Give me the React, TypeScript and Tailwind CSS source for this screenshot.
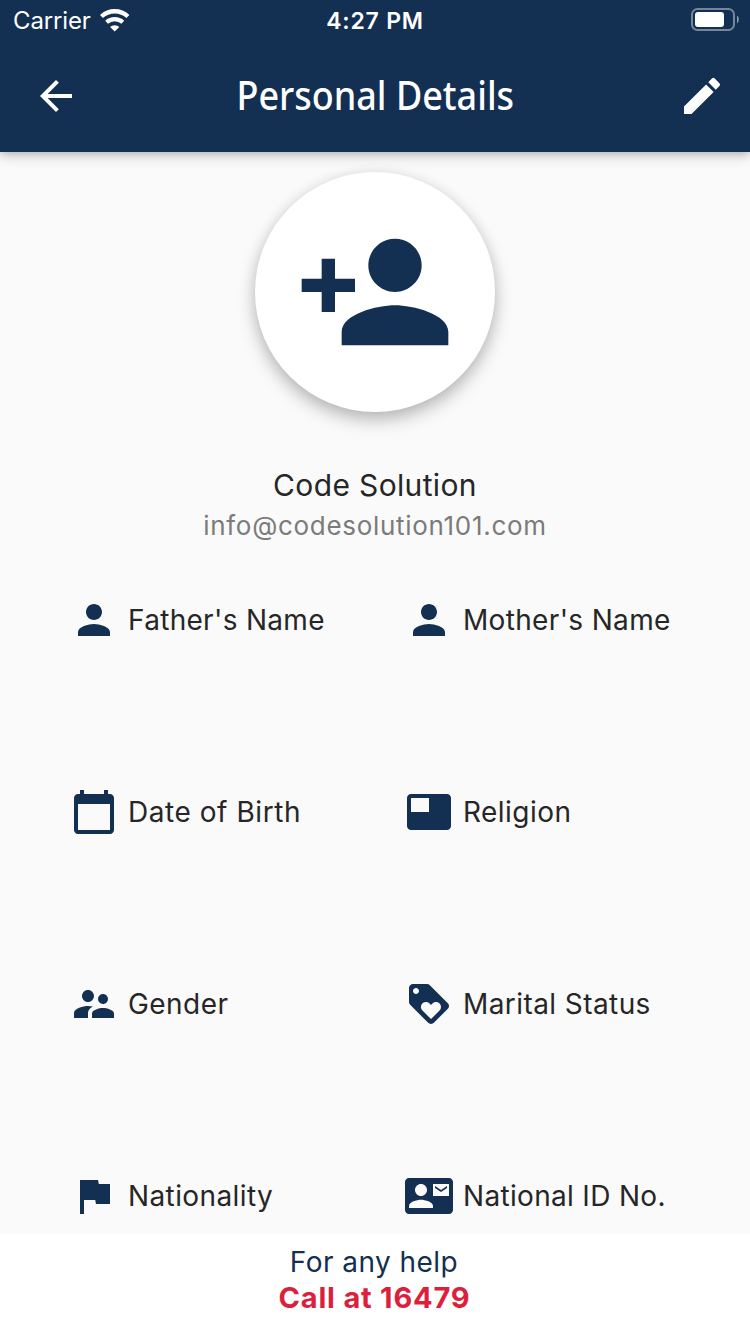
import type { IconType } from "react-icons";
import {
  MdArrowBack,
  MdCalendarToday,
  MdContactMail,
  MdEdit,
  MdFeaturedVideo,
  MdFlag,
  MdLoyalty,
  MdPerson,
  MdPersonAdd,
  MdSupervisorAccount,
} from "react-icons/md";

type Field = { label: string; icon: IconType; tracking: string };

const fields: Field[] = [
  { label: "Father's Name", icon: MdPerson, tracking: "tracking-[0.3px]" },
  { label: "Mother's Name", icon: MdPerson, tracking: "tracking-[0.33px]" },
  { label: "Date of Birth", icon: MdCalendarToday, tracking: "tracking-[0.55px]" },
  { label: "Religion", icon: MdFeaturedVideo, tracking: "tracking-[0.45px]" },
  { label: "Gender", icon: MdSupervisorAccount, tracking: "tracking-[0.45px]" },
  { label: "Marital Status", icon: MdLoyalty, tracking: "tracking-[0.42px]" },
  { label: "Nationality", icon: MdFlag, tracking: "tracking-[0.4px]" },
  { label: "National ID No.", icon: MdContactMail, tracking: "tracking-[0.32px]" },
];

function WifiIcon() {
  return (
    <svg viewBox="0 0 30 23" className="-mt-0.5 h-[23px] w-[30px]" fill="none" stroke="white">
      <path d="M1.5 7.5a19.4 19.4 0 0 1 26.4 0" strokeWidth="4.4" />
      <path d="M6.6 13.2a12 12 0 0 1 16.2 0" strokeWidth="4.2" />
      <path d="M14.7 22.6l-4.6-4.5a6.5 6.5 0 0 1 9.2 0z" fill="white" stroke="none" />
    </svg>
  );
}

function BatteryIcon() {
  return (
    <svg viewBox="0 0 48 23" className="h-[23px] w-[48px]">
      <rect x="1" y="1" width="42" height="21" rx="5.5" fill="none" stroke="white" strokeOpacity="0.42" strokeWidth="2" />
      <rect x="4" y="4" width="29" height="15" rx="3" fill="white" />
      <path d="M46 7.6c2.4 1.2 2.4 6.6 0 7.8z" fill="white" fillOpacity="0.5" />
    </svg>
  );
}

function StatusBar() {
  return (
    <div className="grid h-10 grid-cols-3 items-start pl-[13px] pr-[11px] pt-2">
      <div className="flex items-center gap-[9px]">
        <span className="text-[24px] leading-[26px] tracking-[-0.15px]">Carrier</span>
        <WifiIcon />
      </div>
      <span className="pt-[1.5px] pr-[2px] text-center text-[23px] leading-[23px] font-semibold tracking-[0.8px]">4:27 PM</span>
      <div className="flex justify-end">
        <BatteryIcon />
      </div>
    </div>
  );
}

function DetailItem({ label, icon: Icon, tracking }: Field) {
  return (
    <div className="flex h-12 items-center gap-2.5">
      <Icon className="size-12 shrink-0 text-[#132f51]" />
      <span className={`text-[28px] leading-9 whitespace-nowrap text-[#262626] ${tracking}`}>{label}</span>
    </div>
  );
}

export default function App() {
  return (
    <div className="flex h-[1334px] w-[750px] flex-col overflow-hidden bg-[#fafafa] font-[Inter,sans-serif]">
      <header className="z-10 h-[152px] shrink-0 bg-[#132f51] text-white shadow-[0_4px_12px_rgba(0,0,0,0.18),0_1px_8px_rgba(0,0,0,0.16)]">
        <StatusBar />
        <div className="grid h-28 grid-cols-[48px_1fr_48px] items-center pr-6 pl-8">
          <MdArrowBack className="size-12" />
          <h1 className="scale-x-[0.922] pr-2 pb-[3px] text-center font-['Noto_Sans',sans-serif] text-[39px] leading-none font-medium">
            Personal Details
          </h1>
          <MdEdit className="size-12" />
        </div>
      </header>

      <main className="flex min-h-0 flex-1 flex-col overflow-hidden">
        <section className="flex flex-col items-center pt-5">
          <div className="flex size-60 items-center justify-center rounded-full bg-white shadow-[0_8px_18px_rgba(0,0,0,0.24),0_2px_14px_rgba(0,0,0,0.08)]">
            <MdPersonAdd className="size-40 text-[#132f51]" />
          </div>
          <h2 className="mt-[53px] text-[30px] leading-10 tracking-[0.35px] text-[#262626]">Code Solution</h2>
          <p className="mt-px text-[26px] leading-10 tracking-[0.7px] text-[#7b7b7b]">info@codesolution101.com</p>
        </section>
        <section className="mt-[50px] grid grid-cols-[335px_1fr] gap-y-36 pl-[70px]">
          {fields.map((field) => (
            <DetailItem key={field.label} {...field} />
          ))}
        </section>
      </main>

      <footer className="flex h-[100px] shrink-0 flex-col items-center bg-white pt-[10px] pr-[2px]">
        <span className="text-[28px] leading-9 tracking-[0.45px] text-[#132f51]">For any help</span>
        <span className="pl-px text-[29px] leading-9 font-bold tracking-[0.8px] text-[#dc1f3c]">Call at 16479</span>
      </footer>
    </div>
  );
}
